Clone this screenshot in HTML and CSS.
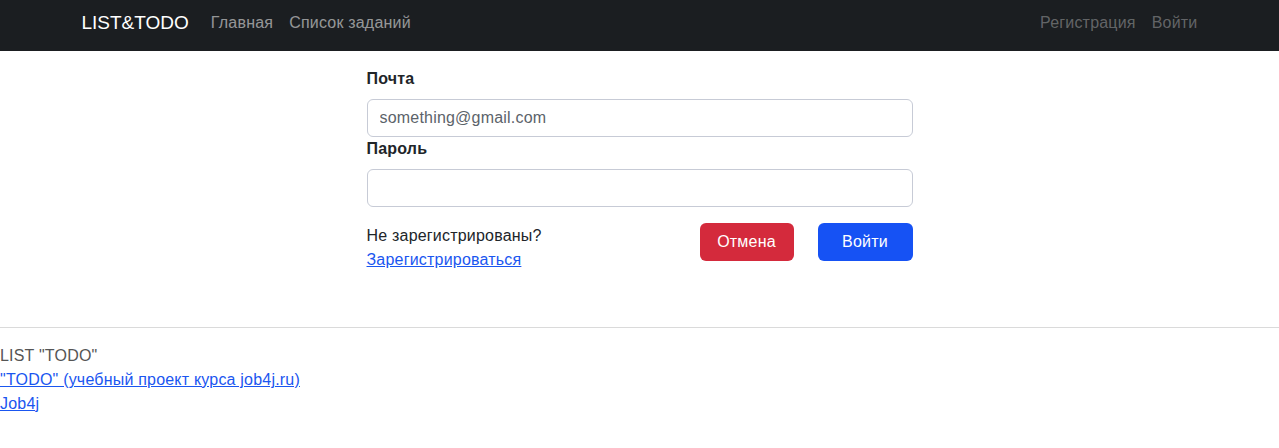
FILE: index.html
```html
<!DOCTYPE html>
<html lang="ru">
<head>
<meta charset="utf-8">
<title>LIST&amp;TODO</title>
<link rel="stylesheet" href="styles.css">
</head>
<body>
<nav class="navbar">
  <div class="container nav-inner">
    <div class="nav-left">
      <a class="brand" href="#">LIST&amp;TODO</a>
      <a class="nav-link" href="#">Главная</a>
      <a class="nav-link" href="#">Список заданий</a>
    </div>
    <div class="nav-right">
      <a class="nav-link" href="#">Регистрация</a>
      <a class="nav-link" href="#">Войти</a>
    </div>
  </div>
</nav>
<main class="container main">
  <form class="login-form">
    <label class="form-label" for="email">Почта</label>
    <input class="form-control" id="email" type="email" placeholder="something@gmail.com">
    <label class="form-label" for="password">Пароль</label>
    <input class="form-control" id="password" type="password">
    <div class="form-bottom">
      <div class="register">
        <div>Не зарегистрированы?</div>
        <a class="link" href="#">Зарегистрироваться</a>
      </div>
      <div class="buttons">
        <button type="button" class="btn btn-danger">Отмена</button>
        <button type="submit" class="btn btn-primary">Войти</button>
      </div>
    </div>
  </form>
</main>
<footer class="footer">
  <hr class="divider">
  <div class="footer-text">LIST "TODO"</div>
  <a class="link" href="#">"TODO" (учебный проект курса job4j.ru)</a><br>
  <a class="link" href="#">Job4j</a>
</footer>
</body>
</html>
```
FILE: styles.css
```css
* { box-sizing: border-box; }
body {
  margin: 0;
  font-family: "Liberation Sans", Arial, sans-serif;
  font-size: 16px;
  line-height: 24px;
  letter-spacing: 0.2px;
  color: #212529;
  background: #fff;
}
.container {
  max-width: 1140px;
  margin: 0 auto;
  padding: 0 12px;
}
.navbar {
  background: #1b1e21;
  height: 51px;
}
.nav-inner {
  height: 100%;
  display: flex;
  justify-content: space-between;
  align-items: center;
  padding-bottom: 5px;
}
.nav-left, .nav-right {
  display: flex;
  align-items: center;
}
.brand {
  color: #fff;
  font-size: 19px;
  line-height: 30px;
  letter-spacing: 0;
  margin-right: 14px;
  text-decoration: none;
}
.nav-link {
  color: rgba(255,255,255,0.55);
  padding: 8px;
  text-decoration: none;
}
.nav-right .nav-link { color: rgba(255,255,255,0.33); }
.nav-right .nav-link:last-child { padding-right: 0; }
.main { padding-top: 16px; }
.login-form {
  width: 546px;
  margin: 0 auto;
  display: flex;
  flex-direction: column;
}
.form-label {
  font-weight: bold;
  margin-bottom: 8px;
}
.form-control {
  display: block;
  width: 100%;
  height: 38px;
  padding: 6px 12px;
  font: inherit;
  letter-spacing: inherit;
  color: #212529;
  border: 1px solid #c7cbd6;
  border-radius: 6px;
  background: #fff;
}
.form-control::placeholder { color: #5c636a; opacity: 1; }
.form-bottom {
  display: flex;
  justify-content: space-between;
  margin-top: 16px;
}
.register { padding-top: 1px; }
.link { color: #1a56f0; text-decoration: underline; }
.buttons {
  display: flex;
  gap: 24px;
  align-items: flex-start;
}
.btn {
  font: inherit;
  letter-spacing: inherit;
  line-height: 24px;
  padding: 6px 12px;
  border: 1px solid transparent;
  border-radius: 6px;
  color: #fff;
}
.btn-danger { background: #d42a3c; width: 94px; }
.btn-primary { background: #1652f4; width: 95px; }
.footer { margin-top: 55px; }
.divider {
  margin: 0 0 16px;
  border: 0;
  border-top: 1px solid #dadada;
}
.footer-text { color: #555; }
```
